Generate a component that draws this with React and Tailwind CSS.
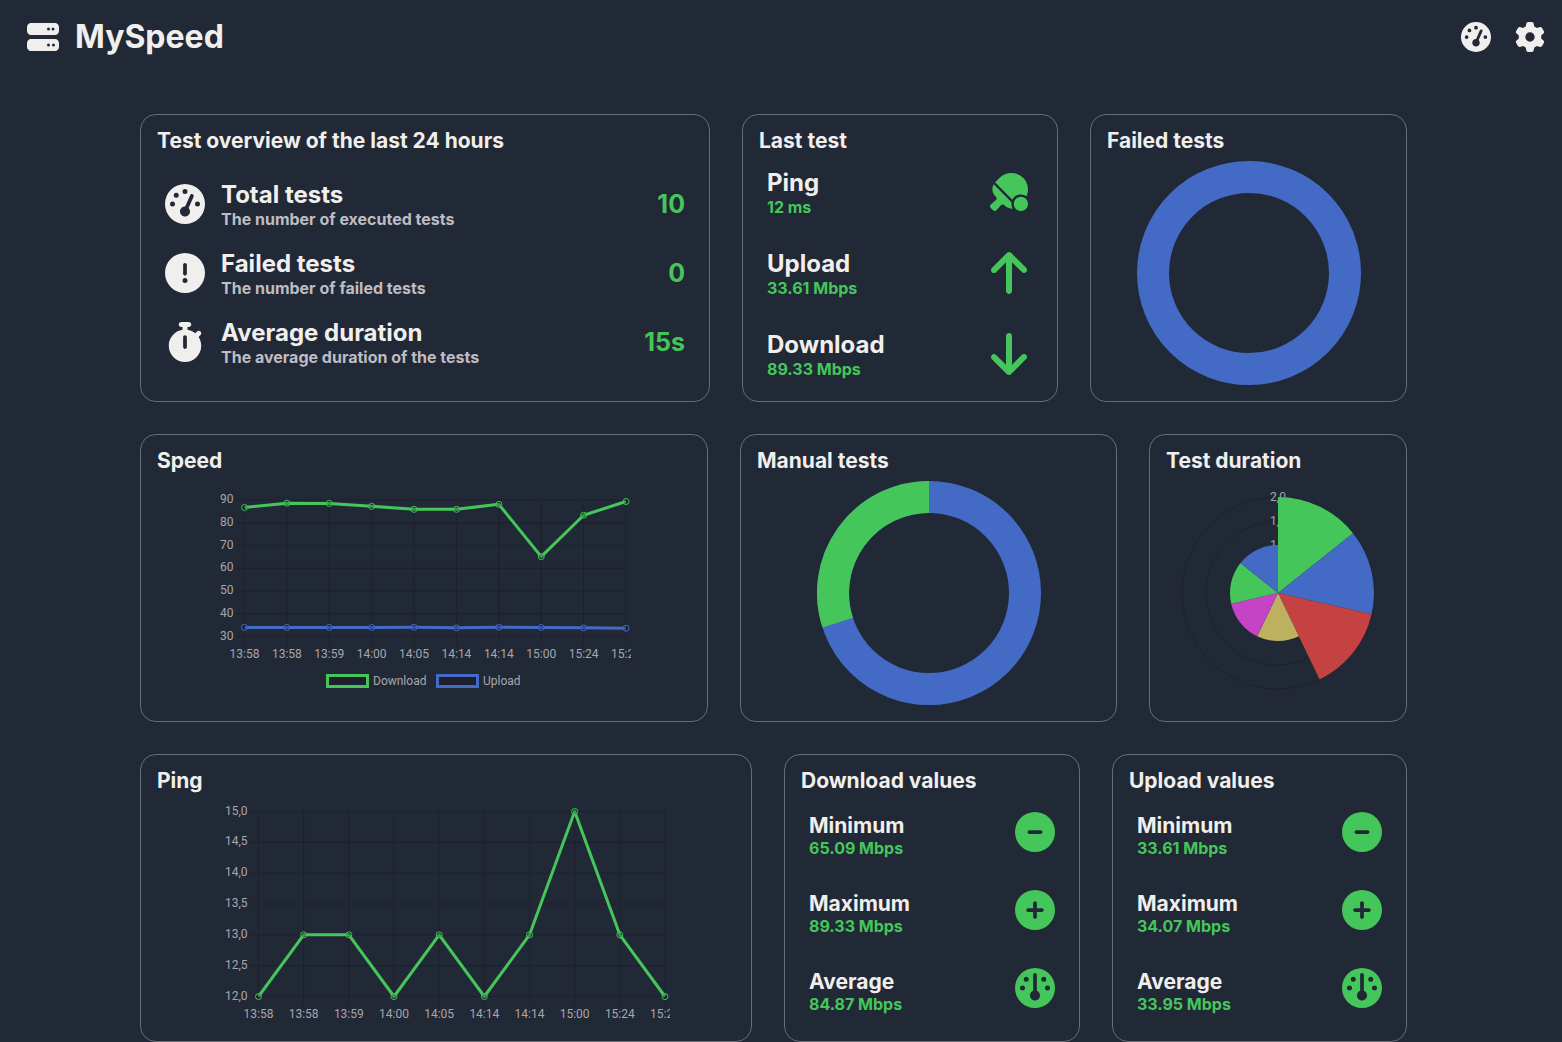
import {
  FaArrowDown,
  FaArrowUp,
  FaCircleExclamation,
  FaCircleMinus,
  FaCirclePlus,
  FaGauge,
  FaGaugeHigh,
  FaGear,
  FaServer,
  FaStopwatch,
  FaTableTennisPaddleBall,
} from "react-icons/fa6";

const GREEN = "#45c65a";
const BLUE = "#436bc5";
const RED = "#c44242";
const YELLOW = "#bdb15f";
const PINK = "#c543c6";
const GRID = "#201f2d";

const times = [
  "13:58",
  "13:58",
  "13:59",
  "14:00",
  "14:05",
  "14:14",
  "14:14",
  "15:00",
  "15:24",
  "15:24",
];

const speedSeries = [
  {
    label: "Download",
    color: GREEN,
    values: [86.7, 88.6, 88.5, 87.2, 85.9, 85.9, 88.1, 65.09, 83.3, 89.33],
  },
  {
    label: "Upload",
    color: BLUE,
    values: [34, 34, 34, 34, 34.07, 33.8, 34.07, 34, 33.8, 33.61],
  },
];

const pingSeries = [
  { label: "Ping", color: GREEN, values: [12, 13, 13, 12, 13, 12, 13, 15, 13, 12] },
];

const overview = [
  {
    icon: FaGaugeHigh,
    title: "Total tests",
    text: "The number of executed tests",
    value: "10",
  },
  {
    icon: FaCircleExclamation,
    title: "Failed tests",
    text: "The number of failed tests",
    value: "0",
  },
  {
    icon: FaStopwatch,
    title: "Average duration",
    text: "The average duration of the tests",
    value: "15s",
  },
];

const lastTest = [
  { icon: FaTableTennisPaddleBall, size: "size-[38px]", title: "Ping", value: "12 ms" },
  { icon: FaArrowUp, size: "size-12", title: "Upload", value: "33.61 Mbps" },
  { icon: FaArrowDown, size: "size-12", title: "Download", value: "89.33 Mbps" },
];

const Card = ({ title, children }) => (
  <section className="flex min-w-0 flex-col rounded-2xl border border-[#686c74] p-4">
    <h2 className="h-[30px] text-[21px] leading-5 font-bold whitespace-nowrap">
      {title}
    </h2>
    {children}
  </section>
);

const OverviewCard = () => (
  <Card title="Test overview of the last 24 hours">
    <div className="flex h-56 flex-col justify-center gap-[21px] px-2">
      {overview.map(({ icon: Icon, title, text, value }) => (
        <div key={title} className="flex items-center gap-4">
          <Icon className="size-10 shrink-0" />
          <div className="grow">
            <h3 className="text-2xl leading-[30px] font-bold">{title}</h3>
            <p className="text-base leading-[18px] font-bold text-[#bfbcc2]">{text}</p>
          </div>
          <p className="text-[25px] leading-8 font-bold text-[#45c65a]">{value}</p>
        </div>
      ))}
    </div>
  </Card>
);

const LastTestCard = () => (
  <Card title="Last test">
    <div className="flex h-56 flex-col justify-between px-2 py-1.5">
      {lastTest.map(({ icon: Icon, size, title, value }) => (
        <div key={title} className="flex h-[50px] items-center justify-between">
          <div>
            <h3 className="text-2xl leading-[30px] font-bold">{title}</h3>
            <p className="text-base leading-[18px] font-bold text-[#45c65a]">{value}</p>
          </div>
          <div className="flex size-12 items-center justify-center text-[#45c65a]">
            <Icon className={size} />
          </div>
        </div>
      ))}
    </div>
  </Card>
);

const ValuesCard = ({ title, min, max, avg }) => {
  const rows = [
    { icon: FaCircleMinus, label: "Minimum", value: min },
    { icon: FaCirclePlus, label: "Maximum", value: max },
    { icon: FaGauge, label: "Average", value: avg },
  ];

  return (
    <Card title={title}>
      <div className="flex h-56 flex-col justify-between px-2 pt-[11px] pb-[13px]">
        {rows.map(({ icon: Icon, label, value }) => (
          <div key={label} className="flex items-start justify-between">
            <div>
              <h3 className="text-[21px] leading-7 font-bold">{label}</h3>
              <p className="text-base leading-4 font-bold text-[#45c65a]">{value}</p>
            </div>
            <Icon className="size-10 text-[#45c65a]" />
          </div>
        ))}
      </div>
    </Card>
  );
};

const LineChart = ({ width, height, left, right, top, bottom, ticks, format, series, legend }) => {
  const min = ticks[0];
  const max = ticks[ticks.length - 1];
  const x = (i) => left + (i * (right - left)) / (times.length - 1);
  const y = (v) => bottom - ((v - min) / (max - min)) * (bottom - top);

  return (
    <svg
      width={width}
      height={height}
      viewBox={`0 0 ${width} ${height}`}
      className="max-w-full overflow-hidden font-['Roboto',sans-serif] text-xs"
    >
      {ticks.map((tick) => (
        <g key={tick}>
          <line x1={left - 8} x2={right} y1={y(tick)} y2={y(tick)} stroke={GRID} />
          <text x={left - 11} y={y(tick) + 3} textAnchor="end" fill="#a8a6ac">
            {format(tick)}
          </text>
        </g>
      ))}
      {times.map((time, i) => (
        <g key={i}>
          <line x1={x(i)} x2={x(i)} y1={top} y2={bottom + 8} stroke={GRID} />
          <text x={x(i)} y={bottom + 21} textAnchor="middle" fill="#a8a6ac">
            {time}
          </text>
        </g>
      ))}
      {series.map(({ label, color, values }) => (
        <g key={label} stroke={color} fill="none">
          <polyline
            points={values.map((v, i) => `${x(i)},${y(v)}`).join(" ")}
            strokeWidth="3"
            strokeLinejoin="round"
          />
          {values.map((v, i) => (
            <circle key={i} cx={x(i)} cy={y(v)} r="3" fill="#00000033" />
          ))}
        </g>
      ))}
      {legend &&
        series.map(({ label, color }, i) => (
          <g key={label}>
            <rect
              x={110.5 + i * 110}
              y={185.5}
              width="40"
              height="11"
              fill={GRID}
              stroke={color}
              strokeWidth="3"
            />
            <text x={156 + i * 110} y={195} fill="#a8a6ac">
              {label}
            </text>
          </g>
        ))}
    </svg>
  );
};

const point = (radius, turn) => {
  const angle = turn * 2 * Math.PI - Math.PI / 2;
  return `${112 + radius * Math.cos(angle)} ${112 + radius * Math.sin(angle)}`;
};

const Doughnut = ({ share = 0 }) => (
  <svg viewBox="0 0 224 224" className="size-56">
    <circle cx="112" cy="112" r="96" fill="none" stroke={BLUE} strokeWidth="32" />
    {share > 0 && (
      <path
        d={`M${point(96, 1 - share)} A96 96 0 0 1 112 16`}
        fill="none"
        stroke={GREEN}
        strokeWidth="32"
      />
    )}
  </svg>
);

const slices = [
  { radius: 96, color: GREEN },
  { radius: 96, color: BLUE },
  { radius: 96, color: RED },
  { radius: 48, color: YELLOW },
  { radius: 48, color: PINK },
  { radius: 48, color: GREEN },
  { radius: 48, color: BLUE },
];

const PolarChart = () => (
  <svg
    viewBox="0 0 224 224"
    className="size-56 font-['Roboto',sans-serif] text-xs"
  >
    <circle cx="112" cy="112" r="72" fill="none" stroke={GRID} />
    <circle cx="112" cy="112" r="96" fill="none" stroke={GRID} />
    <g fill="#a8a6ac" textAnchor="middle">
      <text x="112" y="20">2,0</text>
      <text x="112" y="44">1,5</text>
      <text x="112" y="68">1,0</text>
    </g>
    {slices.map(({ radius, color }, i) => (
      <path
        key={i}
        d={`M112 112 L${point(radius, i / 7)} A${radius} ${radius} 0 0 1 ${point(radius, (i + 1) / 7)} Z`}
        fill={color}
      />
    ))}
  </svg>
);

const Header = () => (
  <header className="flex h-[74px] items-center justify-between pr-[17px] pl-[27px]">
    <div className="flex items-center gap-4">
      <FaServer className="size-8" />
      <h1 className="text-[32px] leading-10 font-bold">MySpeed</h1>
    </div>
    <div className="flex items-center gap-6">
      <button type="button" aria-label="Run test" className="cursor-pointer">
        <FaGaugeHigh className="size-[30px]" />
      </button>
      <button type="button" aria-label="Settings" className="cursor-pointer">
        <FaGear className="size-[30px]" />
      </button>
    </div>
  </header>
);

export default function App() {
  return (
    <div className="min-h-screen bg-[#212936] font-['Inter',sans-serif] text-[#f1efed]">
      <Header />
      <main className="flex flex-col gap-8 pt-10 pr-[155px] pl-[140px]">
        <div className="grid grid-cols-[570fr_316fr_317fr] gap-8">
          <OverviewCard />
          <LastTestCard />
          <Card title="Failed tests">
            <div className="flex h-56 justify-center">
              <Doughnut />
            </div>
          </Card>
        </div>

        <div className="grid grid-cols-[568fr_377fr_258fr] gap-8">
          <Card title="Speed">
            <div className="flex h-56 items-center justify-center">
              <LineChart
                width={414}
                height={206}
                left={27.5}
                right={409}
                top={10}
                bottom={146.5}
                ticks={[30, 40, 50, 60, 70, 80, 90]}
                format={(v) => v}
                series={speedSeries}
                legend
              />
            </div>
          </Card>
          <Card title="Manual tests">
            <div className="flex h-56 justify-center">
              <Doughnut share={0.3} />
            </div>
          </Card>
          <Card title="Test duration">
            <div className="flex h-56 justify-center">
              <PolarChart />
            </div>
          </Card>
        </div>

        <div className="grid grid-cols-[612fr_296fr_295fr] gap-8">
          <Card title="Ping">
            <div className="flex h-56 items-center justify-center">
              <LineChart
                width={448}
                height={224}
                left={36.5}
                right={443}
                top={10.5}
                bottom={195.5}
                ticks={[12, 12.5, 13, 13.5, 14, 14.5, 15]}
                format={(v) => v.toFixed(1).replace(".", ",")}
                series={pingSeries}
              />
            </div>
          </Card>
          <ValuesCard
            title="Download values"
            min="65.09 Mbps"
            max="89.33 Mbps"
            avg="84.87 Mbps"
          />
          <ValuesCard
            title="Upload values"
            min="33.61 Mbps"
            max="34.07 Mbps"
            avg="33.95 Mbps"
          />
        </div>
      </main>
    </div>
  );
}
